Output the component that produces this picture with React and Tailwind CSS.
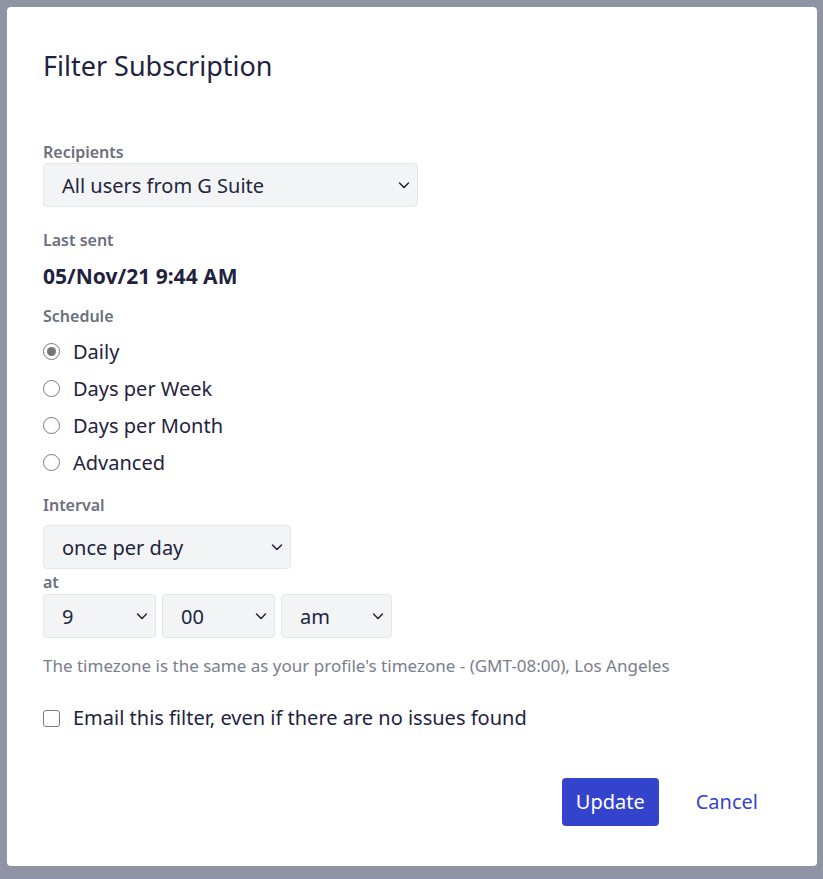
import React, { useState } from "react";

const Chevron = () => (
  <svg width="14" height="14" viewBox="0 0 14 14" fill="none" className="shrink-0">
    <path d="M2.5 5l4.5 4.5L11.5 5" stroke="#1f2340" strokeWidth="1.5" strokeLinecap="round" strokeLinejoin="round" />
  </svg>
);

const Select = ({ value, className }) => (
  <div
    className={`flex h-[44px] items-center justify-between rounded-[4px] border border-[#e4e6ea] bg-[#f3f4f6] pl-[18px] pr-[6px] text-[20px] text-[#1f2340] ${className}`}
  >
    <span className="pt-[2px]">{value}</span>
    <Chevron />
  </div>
);

const Radio = ({ label, checked }) => (
  <div className="flex h-[37px] items-center gap-[13px]">
    <span className="flex h-[17px] w-[17px] items-center justify-center rounded-full border border-[#7a7a7a] bg-white">
      {checked && <span className="h-[9px] w-[9px] rounded-full bg-[#757575]" />}
    </span>
    <span>{label}</span>
  </div>
);

const Label = ({ children, className = "" }) => (
  <div className={`text-[16px] font-semibold text-[#6b6f80] ${className}`}>{children}</div>
);

export default function App() {
  const [schedule] = useState("Daily");
  return (
    <div
      className="min-h-[879px] bg-[#8f93a4] p-[7px] text-[#1f2340]"
      style={{ fontFamily: '"Noto Sans", "Open Sans", sans-serif' }}
    >
      <div className="flex h-[859px] w-[810px] flex-col rounded-[4px] bg-white px-[36px] pt-[39px]">
        <h1 className="text-[27px] font-normal leading-[40px]">Filter Subscription</h1>

        <Label className="mt-[55px] leading-[22px]">Recipients</Label>
        <Select value="All users from G Suite" className="w-[375px]" />

        <Label className="mt-[22px] leading-[22px]">Last sent</Label>
        <div className="mt-[12px] text-[21px] font-bold leading-[26px]">05/Nov/21 9:44 AM</div>

        <Label className="mt-[16px] leading-[22px]">Schedule</Label>
        <div className="mt-[6px] text-[20px]">
          {["Daily", "Days per Week", "Days per Month", "Advanced"].map((s) => (
            <Radio key={s} label={s} checked={s === schedule} />
          ))}
        </div>

        <Label className="mt-[13px] leading-[22px]">Interval</Label>
        <Select value="once per day" className="mt-[9px] w-[248px]" />
        <Label className="mt-[1px] leading-[24px]">at</Label>
        <div className="flex gap-[6px]">
          <Select value="9" className="w-[113px]" />
          <Select value="00" className="w-[113px]" />
          <Select value="am" className="w-[111px]" />
        </div>

        <div className="mt-[17px] text-[17px] leading-[22px] text-[#7a7e8e]">
          The timezone is the same as your profile's timezone - (GMT-08:00), Los Angeles
        </div>

        <div className="mt-[26px] flex items-center gap-[13px] text-[20px]">
          <span className="h-[17px] w-[17px] rounded-[3px] border border-[#7a7a7a] bg-white" />
          <span>Email this filter, even if there are no issues found</span>
        </div>

        <div className="mt-[45px] flex items-center justify-end gap-[14px]">
          <button className="h-[48px] rounded-[4px] bg-[#3443cc] px-[14px] text-[20px] text-white">
            Update
          </button>
          <button className="h-[48px] px-[23px] text-[20px] text-[#3443cc]">Cancel</button>
        </div>
      </div>
    </div>
  );
}
